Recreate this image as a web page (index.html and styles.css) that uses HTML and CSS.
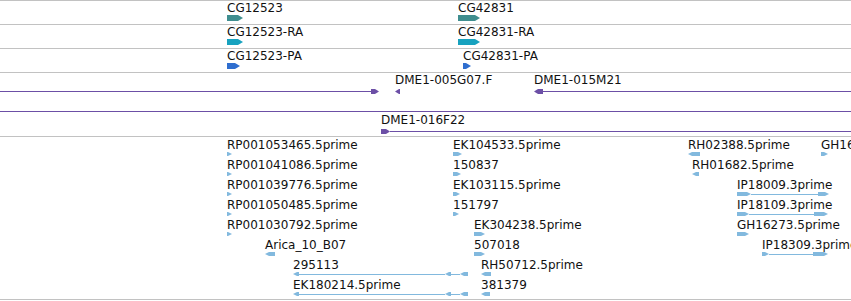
FILE: index.html
```html
<!DOCTYPE html>
<html lang="en">

<head>
    <meta charset="UTF-8" />
    <meta name="viewport" content="width=device-width, initial-scale=1.0" />
    <title>Track view</title>
    <link rel="stylesheet" href="styles.css">
</head>

<body>
    <div class="view">
        <!-- genes -->
        <div class="track gene-track gene">
            <div class="row">
                <div class="feature" style="left:227px">
                    <div class="label">CG12523</div>
                    <div class="glyph"><span class="box fwd" style="width:16px"></span></div>
                </div>
                <div class="feature" style="left:458px">
                    <div class="label">CG42831</div>
                    <div class="glyph"><span class="box fwd" style="width:22px"></span></div>
                </div>
            </div>
        </div>

        <!-- transcripts -->
        <div class="track gene-track transcript">
            <div class="row">
                <div class="feature" style="left:227px">
                    <div class="label">CG12523-RA</div>
                    <div class="glyph"><span class="box fwd" style="width:16px"></span></div>
                </div>
                <div class="feature" style="left:458px">
                    <div class="label">CG42831-RA</div>
                    <div class="glyph"><span class="box fwd" style="width:22px"></span></div>
                </div>
            </div>
        </div>

        <!-- proteins -->
        <div class="track gene-track protein">
            <div class="row">
                <div class="feature" style="left:227px">
                    <div class="label">CG12523-PA</div>
                    <div class="glyph"><span class="box fwd" style="width:13px"></span></div>
                </div>
                <div class="feature" style="left:463px">
                    <div class="label">CG42831-PA</div>
                    <div class="glyph"><span class="box fwd" style="width:8px"></span></div>
                </div>
            </div>
        </div>

        <!-- clones -->
        <div class="track clone-track">
            <div class="row">
                <div class="feature bare" style="left:0">
                    <div class="glyph"><span class="ln" style="width:371px"></span><span class="box fwd" style="width:8px"></span></div>
                </div>
                <div class="feature" style="left:395px">
                    <div class="label">DME1-005G07.F</div>
                    <div class="glyph"><span class="box rev" style="width:5px"></span></div>
                </div>
                <div class="feature" style="left:534px">
                    <div class="label">DME1-015M21</div>
                    <div class="glyph"><span class="box rev" style="width:9px"></span><span class="ln" style="width:320px"></span></div>
                </div>
            </div>
            <div class="row">
                <div class="feature bare" style="left:0">
                    <div class="glyph"><span class="ln" style="width:851px"></span></div>
                </div>
            </div>
            <div class="row">
                <div class="feature" style="left:381px">
                    <div class="label">DME1-016F22</div>
                    <div class="glyph"><span class="box fwd" style="width:9px"></span><span class="ln" style="width:470px"></span></div>
                </div>
            </div>
        </div>

        <!-- ESTs -->
        <div class="track est-track">
            <div class="row">
                <div class="feature" style="left:227px">
                    <div class="label">RP001053465.5prime</div>
                    <div class="glyph"><span class="box fwd" style="width:5px"></span></div>
                </div>
                <div class="feature" style="left:453px">
                    <div class="label">EK104533.5prime</div>
                    <div class="glyph"><span class="box fwd" style="width:9px"></span></div>
                </div>
                <div class="feature" style="left:688px">
                    <div class="label">RH02388.5prime</div>
                    <div class="glyph"><span class="box rev" style="width:12px"></span></div>
                </div>
                <div class="feature" style="left:821px">
                    <div class="label">GH16218.5prime</div>
                    <div class="glyph"><span class="box fwd" style="width:7px"></span></div>
                </div>
            </div>
            <div class="row">
                <div class="feature" style="left:227px">
                    <div class="label">RP001041086.5prime</div>
                    <div class="glyph"><span class="box fwd" style="width:5px"></span></div>
                </div>
                <div class="feature" style="left:453px">
                    <div class="label">150837</div>
                    <div class="glyph"><span class="box fwd" style="width:8px"></span></div>
                </div>
                <div class="feature" style="left:692px">
                    <div class="label">RH01682.5prime</div>
                    <div class="glyph"><span class="box rev" style="width:7px"></span></div>
                </div>
            </div>
            <div class="row">
                <div class="feature" style="left:227px">
                    <div class="label">RP001039776.5prime</div>
                    <div class="glyph"><span class="box fwd" style="width:5px"></span></div>
                </div>
                <div class="feature" style="left:453px">
                    <div class="label">EK103115.5prime</div>
                    <div class="glyph"><span class="box fwd" style="width:7px"></span></div>
                </div>
                <div class="feature" style="left:737px">
                    <div class="label">IP18009.3prime</div>
                    <div class="glyph"><span class="box fwd" style="width:14px"></span><span class="ln" style="width:67px"></span><span class="box fwd" style="width:11px"></span></div>
                </div>
            </div>
            <div class="row">
                <div class="feature" style="left:227px">
                    <div class="label">RP001050485.5prime</div>
                    <div class="glyph"><span class="box fwd" style="width:5px"></span></div>
                </div>
                <div class="feature" style="left:453px">
                    <div class="label">151797</div>
                    <div class="glyph"><span class="box fwd" style="width:6px"></span></div>
                </div>
                <div class="feature" style="left:737px">
                    <div class="label">IP18109.3prime</div>
                    <div class="glyph"><span class="box fwd" style="width:12px"></span><span class="ln" style="width:65px"></span><span class="box fwd" style="width:14px"></span></div>
                </div>
            </div>
            <div class="row">
                <div class="feature" style="left:227px">
                    <div class="label">RP001030792.5prime</div>
                    <div class="glyph"><span class="box fwd" style="width:5px"></span></div>
                </div>
                <div class="feature" style="left:474px">
                    <div class="label">EK304238.5prime</div>
                    <div class="glyph"><span class="box fwd" style="width:11px"></span></div>
                </div>
                <div class="feature" style="left:737px">
                    <div class="label">GH16273.5prime</div>
                    <div class="glyph"><span class="box fwd" style="width:12px"></span></div>
                </div>
            </div>
            <div class="row">
                <div class="feature" style="left:265px">
                    <div class="label">Arica_10_B07</div>
                    <div class="glyph"><span class="box rev" style="width:10px"></span></div>
                </div>
                <div class="feature" style="left:474px">
                    <div class="label">507018</div>
                    <div class="glyph"><span class="box fwd" style="width:11px"></span></div>
                </div>
                <div class="feature" style="left:762px">
                    <div class="label">IP18309.3prime</div>
                    <div class="glyph"><span class="box fwd" style="width:7px"></span><span class="ln" style="width:44px"></span><span class="box fwd" style="width:15px"></span></div>
                </div>
            </div>
            <div class="row">
                <div class="feature" style="left:293px">
                    <div class="label">295113</div>
                    <div class="glyph"><span class="box rev" style="width:6px"></span><span class="ln" style="width:146px"></span><span class="box rev" style="width:6px"></span><span class="ln" style="width:9px"></span><span class="box rev" style="width:8px"></span></div>
                </div>
                <div class="feature" style="left:481px">
                    <div class="label">RH50712.5prime</div>
                    <div class="glyph"><span class="box rev" style="width:10px"></span></div>
                </div>
            </div>
            <div class="row">
                <div class="feature" style="left:293px">
                    <div class="label">EK180214.5prime</div>
                    <div class="glyph"><span class="box rev" style="width:6px"></span><span class="ln" style="width:146px"></span><span class="box rev" style="width:6px"></span><span class="ln" style="width:9px"></span><span class="box rev" style="width:8px"></span></div>
                </div>
                <div class="feature" style="left:481px">
                    <div class="label">381379</div>
                    <div class="glyph"><span class="box rev" style="width:9px"></span></div>
                </div>
            </div>
        </div>
    </div>
</body>

</html>
```

FILE: styles.css
```css
body {
    font-family: "DejaVu Sans", sans-serif;
    font-size: 12px;
    color: #111;
    background-color: #fff;
    margin: 0;
}

.view {
    width: 851px;
    overflow: hidden;
}

.track {
    position: relative;
    border-top: 1px solid #c2c2c2;
}

.track:last-child {
    border-bottom: 1px solid #c2c2c2;
}

.gene-track {
    height: 23px;
}

.clone-track {
    height: 63px;
    color: #6c4fa6;
}

.est-track {
    height: 162px;
    color: #82b9de;
}

.gene {
    color: #3f8e8f;
}

.transcript {
    color: #17a2bf;
}

.protein {
    color: #2f6ecf;
}

.row {
    position: relative;
    height: 20px;
}

.gene-track .row {
    height: 23px;
}

.feature {
    position: absolute;
    top: 1px;
    display: flex;
    flex-direction: column;
    align-items: flex-start;
}

.feature.bare {
    padding-top: 13px;
}

.est-track .feature {
    top: 2px;
}

.label {
    line-height: 13px;
    white-space: nowrap;
    color: #111;
}

.glyph {
    display: flex;
    align-items: center;
    height: 6px;
}

.clone-track .glyph {
    height: 5px;
    margin-top: 2px;
}

.est-track .glyph {
    height: 4px;
}

.box {
    height: 100%;
    flex: none;
    background-color: currentColor;
}

.fwd {
    clip-path: polygon(0 0, calc(100% - 4px) 0, 100% 50%, calc(100% - 4px) 100%, 0 100%);
}

.rev {
    clip-path: polygon(4px 0, 100% 0, 100% 100%, 4px 100%, 0 50%);
}

.gene-track .fwd {
    clip-path: polygon(0 0, calc(100% - 5px) 0, 100% 50%, calc(100% - 5px) 100%, 0 100%);
}

.ln {
    height: 1px;
    flex: none;
    background-color: currentColor;
}
```
